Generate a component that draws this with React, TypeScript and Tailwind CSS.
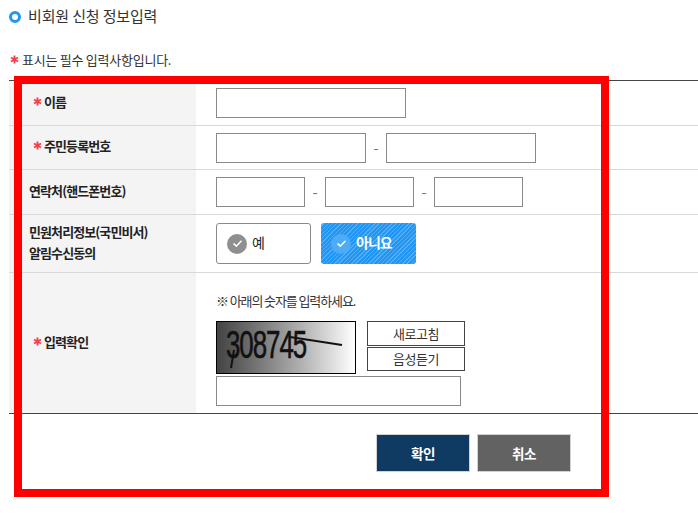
const font = "[font-family:'Noto_Sans_CJK_KR','Liberation_Sans',sans-serif]";

function Star({ className }: { className: string }) {
  return (
    <svg className={className} width="9" height="9" viewBox="0 0 9 9" fill="none">
      <path d="M4.5 .5v8M1 2.5l7 4M8 2.5l-7 4" stroke="#f0414f" strokeWidth="1.9" />
    </svg>
  );
}

function Field({ className }: { className: string }) {
  return <input className={`h-[30px] border border-[#8a8a8a] bg-white ${className}`} />;
}

function Dash() {
  return <span className="w-[20px] text-center text-[15px] text-[#777]">-</span>;
}

function Row({
  label,
  required,
  height,
  last,
  children,
}: {
  label: React.ReactNode;
  required?: boolean;
  height: string;
  last?: boolean;
  children: React.ReactNode;
}) {
  return (
    <div className={`flex ${height} ${last ? "" : "border-b border-[#d9d9d9]"}`}>
      <div
        className={`flex w-[187px] shrink-0 items-center bg-[#f4f4f4] pb-[4px] text-[13px] font-bold leading-[21px] tracking-[-0.9px] text-[#222] ${
          required ? "pl-[24px]" : "pl-[20px]"
        }`}
      >
        {required && <Star className="mr-[2px]" />}
        <div>{label}</div>
      </div>
      <div className="min-w-0 flex-1 pl-[20px]">{children}</div>
    </div>
  );
}

function Check({ bg }: { bg: string }) {
  return (
    <span className={`flex h-[20px] w-[20px] items-center justify-center rounded-full ${bg}`}>
      <svg width="11" height="9" viewBox="0 0 11 9" fill="none">
        <path d="M1.5 4.5 4.3 7.2 9.5 1.8" stroke="#fff" strokeWidth="1.6" />
      </svg>
    </span>
  );
}

export default function App() {
  return (
    <div className={`relative h-[519px] w-[698px] overflow-hidden bg-white ${font}`}>
      <div className="flex h-[32px] items-center pl-[9px] pt-[1px] text-[15px] tracking-[-0.15px] text-[#333]">
        <span className="mr-[7px] h-[12px] w-[12px] rounded-full border-[3px] border-[#2196f3]" />
        비회원 신청 정보입력
      </div>

      <div className="mt-[17px] flex h-[21px] items-center pl-[10px] text-[13px] tracking-[-0.25px] text-[#333]">
        <Star className="mr-[3px]" />
        표시는 필수 입력사항입니다.
      </div>

      <div className="ml-[9px] mt-[10px] border-y border-[#444]">
        <Row label="이름" required height="h-[45px]">
          <div className="pt-[7px]">
            <Field className="w-[190px]" />
          </div>
        </Row>
        <Row label="주민등록번호" required height="h-[44px]">
          <div className="flex items-center pt-[7px]">
            <Field className="w-[150px]" />
            <Dash />
            <Field className="w-[150px]" />
          </div>
        </Row>
        <Row label="연락처(핸드폰번호)" height="h-[45px]">
          <div className="flex items-center pt-[7px]">
            <Field className="w-[89px]" />
            <Dash />
            <Field className="w-[89px]" />
            <Dash />
            <Field className="w-[89px]" />
          </div>
        </Row>
        <Row
          label={
            <>
              민원처리정보(국민비서)
              <br />
              알림수신동의
            </>
          }
          height="h-[58px]"
        >
          <div className="flex gap-[10px] pt-[8px] text-[14px]">
            <div className="flex h-[41px] w-[95px] items-center gap-[5px] rounded-[3px] border border-[#8a8a8a] pl-[10px] text-[#222]">
              <Check bg="bg-[#8f8f8f]" />
              <span className="-mt-[3px]">예</span>
            </div>
            <div className="flex h-[41px] w-[95px] items-center gap-[5px] rounded-[3px] bg-[repeating-linear-gradient(135deg,#2196f3_0,#2196f3_2px,#52acf6_2px,#52acf6_3px)] pl-[10px] font-bold tracking-[-1px] text-white">
              <Check bg="bg-[#4dabf7]" />
              <span className="-mt-[3px]">아니요</span>
            </div>
          </div>
        </Row>
        <Row label="입력확인" required height="h-[140px]" last>
          <div className="pt-[18px]">
            <div className="h-[20px] text-[13px] leading-[20px] tracking-[-1.1px] text-[#333]">
              ※ 아래의 숫자를 입력하세요.
            </div>
            <div className="mt-[10px] flex items-start">
              <div className="relative h-[53px] w-[140px] overflow-hidden border border-black bg-gradient-to-r from-[#444] to-white">
                <span className="absolute left-[9px] top-0 origin-left scale-x-[0.68] whitespace-nowrap font-['Liberation_Sans',sans-serif] text-[38px] leading-[46px] tracking-[-1.5px] text-[#111] [-webkit-text-stroke:0.6px_#111]">
                  308745
                </span>
                <svg className="absolute inset-0" width="138" height="51" viewBox="0 0 138 51" fill="none">
                  <path d="M73 15 125 23" stroke="#111" strokeWidth="2" />
                  <path d="M17 28 14 46" stroke="#111" strokeWidth="2" />
                </svg>
              </div>
              <div className="ml-[11px] w-[98px] text-center text-[13px] tracking-[-0.5px] text-[#333]">
                <div className="h-[25px] border border-[#444] leading-[23px]">새로고침</div>
                <div className="mt-[1px] h-[24px] border border-[#444] leading-[22px]">음성듣기</div>
              </div>
            </div>
            <Field className="mt-[2px] block w-[245px]" />
          </div>
        </Row>
      </div>

      <div className="mt-[20px] flex gap-[7px] pl-[376px] text-[13.5px] font-bold tracking-[-0.5px] text-white">
        <div className="flex h-[38px] w-[94px] items-center justify-center border border-[#d2d2d2] bg-[#0f3a62]">확인</div>
        <div className="flex h-[38px] w-[94px] items-center justify-center border border-[#d2d2d2] bg-[#626262]">취소</div>
      </div>

      <div className="absolute left-[14px] top-[76px] h-[421px] w-[595px] border-[8px] border-[#ff0000]" />
    </div>
  );
}
